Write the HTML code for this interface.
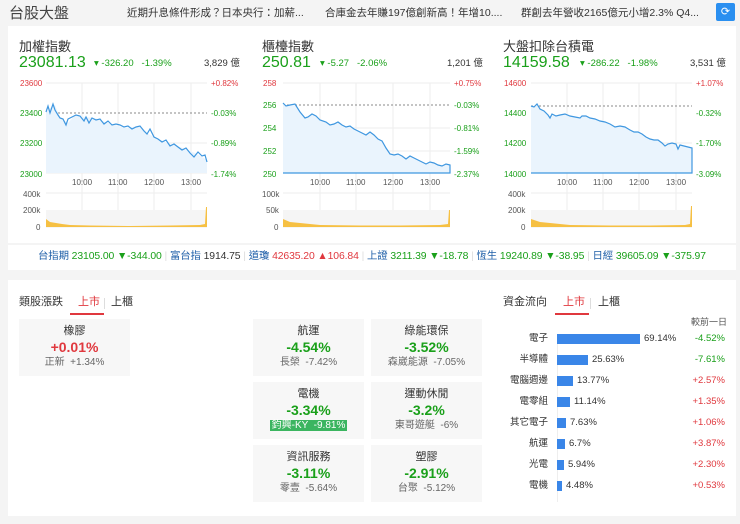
<!DOCTYPE html>
<html><head><meta charset="utf-8"><style>
*{margin:0;padding:0;box-sizing:border-box}
body{width:740px;height:524px;background:#f4f4f4;font-family:"Liberation Sans","Noto Sans CJK TC",sans-serif;position:relative;overflow:hidden;color:#333}
.a{position:absolute;white-space:nowrap;line-height:1}
.g{color:#1aa01a}.r{color:#e0383e}.b{color:#1f5fa8}
.panel{position:absolute;background:#fff}
.tile{position:absolute;background:#f7f7f7;width:111px;height:57px;text-align:center;line-height:1.2}
.tile .n{font-size:11px;color:#333;margin-top:6px}
.tile .p{font-size:14px;font-weight:bold;margin-top:1px}
.tile .s{font-size:10px;color:#666;margin-top:1px}
</style></head><body>
<div class="a" style="left:9px;top:6px;font-size:15px;color:#444">台股大盤</div>
<div class="a" style="left:127px;top:8px;font-size:10.5px;color:#333">近期升息條件形成？日本央行：加薪...</div>
<div class="a" style="left:325px;top:8px;font-size:10.5px;color:#333">合庫金去年賺197億創新高！年增10....</div>
<div class="a" style="left:521px;top:8px;font-size:10.5px;color:#333">群創去年營收2165億元小增2.3% Q4...</div>
<div class="a" style="left:716px;top:3px;width:19px;height:18px;background:#2a8ff0;border-radius:2px;color:#fff;font-size:11px;text-align:center;line-height:18px">⟳</div>

<div class="panel" style="left:8px;top:26px;width:728px;height:217px"></div>

<div class="a" style="left:19px;top:40px;font-size:13px;color:#333">加權指數</div>
<div class="a g" style="left:19px;top:55px;font-size:16px">23081.13</div>
<div class="a g" style="left:94px;top:59px;font-size:9.5px">▾ -326.20 &nbsp; -1.39%</div>
<div class="a" style="left:204px;top:59px;font-size:9.5px">3,829 億</div>
<div class="a" style="left:262px;top:40px;font-size:13px;color:#333">櫃檯指數</div>
<div class="a g" style="left:262px;top:55px;font-size:16px">250.81</div>
<div class="a g" style="left:320px;top:59px;font-size:9.5px">▾ -5.27 &nbsp; -2.06%</div>
<div class="a" style="left:447px;top:59px;font-size:9.5px">1,201 億</div>
<div class="a" style="left:503px;top:40px;font-size:13px;color:#333">大盤扣除台積電</div>
<div class="a g" style="left:503px;top:55px;font-size:16px">14159.58</div>
<div class="a g" style="left:580px;top:59px;font-size:9.5px">▾ -286.22 &nbsp; -1.98%</div>
<div class="a" style="left:690px;top:59px;font-size:9.5px">3,531 億</div>

<svg class="a" style="left:0;top:0" width="740" height="243" font-family="Liberation Sans" font-size="8">
<g>
<g stroke="#eee" stroke-width="1"><line x1="46" y1="83" x2="207" y2="83"/><line x1="46" y1="173" x2="207" y2="173"/><line x1="46" y1="143" x2="207" y2="143"/><line x1="46" y1="193" x2="207" y2="193"/><line x1="46" y1="227" x2="207" y2="227"/><line x1="82" y1="83" x2="82" y2="227"/><line x1="118" y1="83" x2="118" y2="227"/><line x1="154" y1="83" x2="154" y2="227"/><line x1="191" y1="83" x2="191" y2="227"/></g>
<rect x="46" y="210" width="161" height="17" fill="#f5f5f5"/>
<line x1="46" y1="113" x2="207" y2="113" stroke="#888" stroke-dasharray="2,2"/>
<polygon fill="#eaf4fd" points="46,112 50,108 55,105 60,118 68,123 75,115 85,117 95,118 105,122 115,125 125,128 140,126 150,135 165,142 180,147 195,153 207,160 207,173 46,173"/>
<polyline fill="none" stroke="#3f97e0" stroke-width="1.2" points="46,112 48,106 50,113 53,104 55,110 58,115 60,118 63,119 66,125 68,119 72,117 76,115 80,116 84,121 86,117 89,123 92,118 96,120 100,119 104,124 108,121 112,125 116,124 120,125 124,127 128,126 132,129 136,127 140,126 144,131 147,134 150,129 154,137 158,139 162,142 166,140 170,146 174,144 178,147 182,150 186,148 190,153 194,157 198,152 202,156 205,155 207,162"/>
<polygon fill="#f6c043" points="46,227 46,219 50,222 56,223 62,224 70,225 90,225.5 130,226 170,225.5 200,225 205,224 206,207 207,207 207,227"/>
<g fill="#e0383e"><text x="20" y="86">23600</text><text x="211" y="86">+0.82%</text></g>
<g fill="#1aa01a"><text x="20" y="116">23400</text><text x="20" y="146">23200</text><text x="20" y="177">23000</text><text x="211" y="116">-0.03%</text><text x="211" y="146">-0.89%</text><text x="211" y="177">-1.74%</text></g>
<g fill="#555"><text x="72" y="185">10:00</text><text x="108" y="185">11:00</text><text x="144" y="185">12:00</text><text x="181" y="185">13:00</text><text x="23" y="197">400k</text><text x="23" y="213">200k</text><text x="36" y="230">0</text></g>
</g>
<g>
<g stroke="#eee"><line x1="283" y1="83" x2="450" y2="83"/><line x1="283" y1="173" x2="450" y2="173"/><line x1="283" y1="128" x2="450" y2="128"/><line x1="283" y1="151" x2="450" y2="151"/><line x1="283" y1="193" x2="450" y2="193"/><line x1="283" y1="227" x2="450" y2="227"/><line x1="320" y1="83" x2="320" y2="227"/><line x1="356" y1="83" x2="356" y2="227"/><line x1="393" y1="83" x2="393" y2="227"/><line x1="430" y1="83" x2="430" y2="227"/></g>
<rect x="283" y="210" width="167" height="17" fill="#f5f5f5"/>
<line x1="283" y1="105" x2="450" y2="105" stroke="#888" stroke-dasharray="2,2"/>
<polyline fill="#eaf4fd" stroke="#3f97e0" stroke-width="1.2" points="283,103 286,106 290,105 295,104 300,112 305,118 308,117 312,114 316,116 320,120 326,122 330,125 334,124 338,122 342,125 346,127 350,126 354,129 358,131 362,133 366,135 370,132 374,135 378,139 382,141 386,148 390,154 394,155 398,154 402,156 406,159 410,156 414,158 418,160 422,162 426,164 430,162 434,163 438,165 442,166 446,164 450,165 450,173 283,173"/>
<polygon fill="#f6c043" points="283,227 283,219 290,222 300,223 320,225 360,225.5 400,225.5 440,225 448,224 449,210 450,210 450,227"/>
<g fill="#e0383e"><text x="263" y="86">258</text><text x="454" y="86">+0.75%</text></g>
<g fill="#1aa01a"><text x="263" y="108">256</text><text x="263" y="131">254</text><text x="263" y="154">252</text><text x="263" y="177">250</text><text x="454" y="108">-0.03%</text><text x="454" y="131">-0.81%</text><text x="454" y="154">-1.59%</text><text x="454" y="177">-2.37%</text></g>
<g fill="#555"><text x="310" y="185">10:00</text><text x="346" y="185">11:00</text><text x="383" y="185">12:00</text><text x="420" y="185">13:00</text><text x="262" y="197">100k</text><text x="266" y="213">50k</text><text x="274" y="230">0</text></g>
</g>
<g>
<g stroke="#eee"><line x1="531" y1="83" x2="692" y2="83"/><line x1="531" y1="173" x2="692" y2="173"/><line x1="531" y1="143" x2="692" y2="143"/><line x1="531" y1="193" x2="692" y2="193"/><line x1="531" y1="227" x2="692" y2="227"/><line x1="567" y1="83" x2="567" y2="227"/><line x1="603" y1="83" x2="603" y2="227"/><line x1="639" y1="83" x2="639" y2="227"/><line x1="676" y1="83" x2="676" y2="227"/></g>
<rect x="531" y="210" width="161" height="17" fill="#f5f5f5"/>
<line x1="531" y1="106" x2="692" y2="106" stroke="#888" stroke-dasharray="2,2"/>
<polyline fill="#eaf4fd" stroke="#3f97e0" stroke-width="1.2" points="531,106 534,107 537,104 540,109 544,111 548,115 550,118 552,114 556,116 560,115 565,114 570,116 575,117 580,118 582,116 586,116 590,118 595,119 600,121 605,122 610,124 615,127 620,126 625,127 630,130 634,132 638,132 642,134 646,137 650,139 654,140 658,140 662,143 665,146 668,144 672,143 676,144 678,149 680,145 684,146 688,147 692,148 692,173 531,173"/>
<polygon fill="#f6c043" points="531,227 531,219 540,222 550,223 570,225 610,225.5 650,225.5 685,225 690,224 691,206 692,206 692,227"/>
<g fill="#e0383e"><text x="504" y="86">14600</text><text x="696" y="86">+1.07%</text></g>
<g fill="#1aa01a"><text x="504" y="116">14400</text><text x="504" y="146">14200</text><text x="504" y="177">14000</text><text x="696" y="116">-0.32%</text><text x="696" y="146">-1.70%</text><text x="696" y="177">-3.09%</text></g>
<g fill="#555"><text x="557" y="185">10:00</text><text x="593" y="185">11:00</text><text x="629" y="185">12:00</text><text x="666" y="185">13:00</text><text x="508" y="197">400k</text><text x="508" y="213">200k</text><text x="521" y="230">0</text></g>
</g>
</svg>

<div class="panel" style="left:8px;top:245px;width:728px;height:25px"></div>
<div class="a" style="left:38px;top:252px;font-size:10.4px;letter-spacing:-0.1px">
<span class="b">台指期</span> <span class="g">23105.00 ▼-344.00</span> <span style="color:#ddd">|</span>
<span class="b">富台指</span> <span>1914.75</span> <span style="color:#ddd">|</span>
<span class="b">道瓊</span> <span class="r">42635.20 ▲106.84</span> <span style="color:#ddd">|</span>
<span class="b">上證</span> <span class="g">3211.39 ▼-18.78</span> <span style="color:#ddd">|</span>
<span class="b">恆生</span> <span class="g">19240.89 ▼-38.95</span> <span style="color:#ddd">|</span>
<span class="b">日經</span> <span class="g">39605.09 ▼-375.97</span>
</div>

<div class="panel" style="left:8px;top:280px;width:728px;height:236px"></div>
<div class="a" style="left:19px;top:297px;font-size:11px">類股漲跌</div>
<div class="a r" style="left:78px;top:297px;font-size:11px">上市</div>
<div class="a" style="left:70px;top:313px;width:34px;height:2px;background:#e0383e"></div>
<div class="a" style="left:111px;top:297px;font-size:11px">上櫃</div>
<div class="a" style="left:104px;top:298px;width:1px;height:11px;background:#ddd"></div>

<div class="tile" style="left:19px;top:319px"><div class="n">橡膠</div><div class="p r">+0.01%</div><div class="s">正新 &nbsp;+1.34%</div></div>
<div class="tile" style="left:253px;top:319px"><div class="n">航運</div><div class="p g">-4.54%</div><div class="s">長榮 &nbsp;-7.42%</div></div>
<div class="tile" style="left:371px;top:319px"><div class="n">綠能環保</div><div class="p g">-3.52%</div><div class="s">森崴能源 &nbsp;-7.05%</div></div>
<div class="tile" style="left:253px;top:382px"><div class="n">電機</div><div class="p g">-3.34%</div><div class="s"><span style="background:#3bb560;color:#fff;padding:0 2px">鈞興-KY &nbsp;-9.81%</span></div></div>
<div class="tile" style="left:371px;top:382px"><div class="n">運動休閒</div><div class="p g">-3.2%</div><div class="s">東哥遊艇 &nbsp;-6%</div></div>
<div class="tile" style="left:253px;top:445px"><div class="n">資訊服務</div><div class="p g">-3.11%</div><div class="s">零壹 &nbsp;-5.64%</div></div>
<div class="tile" style="left:371px;top:445px"><div class="n">塑膠</div><div class="p g">-2.91%</div><div class="s">台聚 &nbsp;-5.12%</div></div>

<div class="a" style="left:503px;top:297px;font-size:11px">資金流向</div>
<div class="a r" style="left:563px;top:297px;font-size:11px">上市</div>
<div class="a" style="left:555px;top:313px;width:34px;height:2px;background:#e0383e"></div>
<div class="a" style="left:598px;top:297px;font-size:11px">上櫃</div>
<div class="a" style="left:590px;top:298px;width:1px;height:11px;background:#ddd"></div>
<div class="a" style="left:691px;top:318px;font-size:9px;color:#555">較前一日</div>

<div class="a" style="left:0;top:334px;width:740px;font-size:9.5px">
<div class="a" style="left:557px;top:0;width:1px;height:168px;background:#eee"></div>
<div class="a" style="top:0px;right:192px">電子</div><div class="a" style="left:557px;top:0px;width:83px;height:10px;background:#3a86e8"></div><div class="a" style="left:644px;top:0">69.14%</div><div class="a g" style="top:0;right:15px">-4.52%</div>
<div class="a" style="top:21px;right:192px">半導體</div><div class="a" style="left:557px;top:21px;width:31px;height:10px;background:#3a86e8"></div><div class="a" style="left:592px;top:21px">25.63%</div><div class="a g" style="top:21px;right:15px">-7.61%</div>
<div class="a" style="top:42px;right:192px">電腦週邊</div><div class="a" style="left:557px;top:42px;width:16px;height:10px;background:#3a86e8"></div><div class="a" style="left:577px;top:42px">13.77%</div><div class="a r" style="top:42px;right:15px">+2.57%</div>
<div class="a" style="top:63px;right:192px">電零組</div><div class="a" style="left:557px;top:63px;width:13px;height:10px;background:#3a86e8"></div><div class="a" style="left:574px;top:63px">11.14%</div><div class="a r" style="top:63px;right:15px">+1.35%</div>
<div class="a" style="top:84px;right:192px">其它電子</div><div class="a" style="left:557px;top:84px;width:9px;height:10px;background:#3a86e8"></div><div class="a" style="left:570px;top:84px">7.63%</div><div class="a r" style="top:84px;right:15px">+1.06%</div>
<div class="a" style="top:105px;right:192px">航運</div><div class="a" style="left:557px;top:105px;width:8px;height:10px;background:#3a86e8"></div><div class="a" style="left:569px;top:105px">6.7%</div><div class="a r" style="top:105px;right:15px">+3.87%</div>
<div class="a" style="top:126px;right:192px">光電</div><div class="a" style="left:557px;top:126px;width:7px;height:10px;background:#3a86e8"></div><div class="a" style="left:568px;top:126px">5.94%</div><div class="a r" style="top:126px;right:15px">+2.30%</div>
<div class="a" style="top:147px;right:192px">電機</div><div class="a" style="left:557px;top:147px;width:5px;height:10px;background:#3a86e8"></div><div class="a" style="left:566px;top:147px">4.48%</div><div class="a r" style="top:147px;right:15px">+0.53%</div>
</div>
</body></html>
